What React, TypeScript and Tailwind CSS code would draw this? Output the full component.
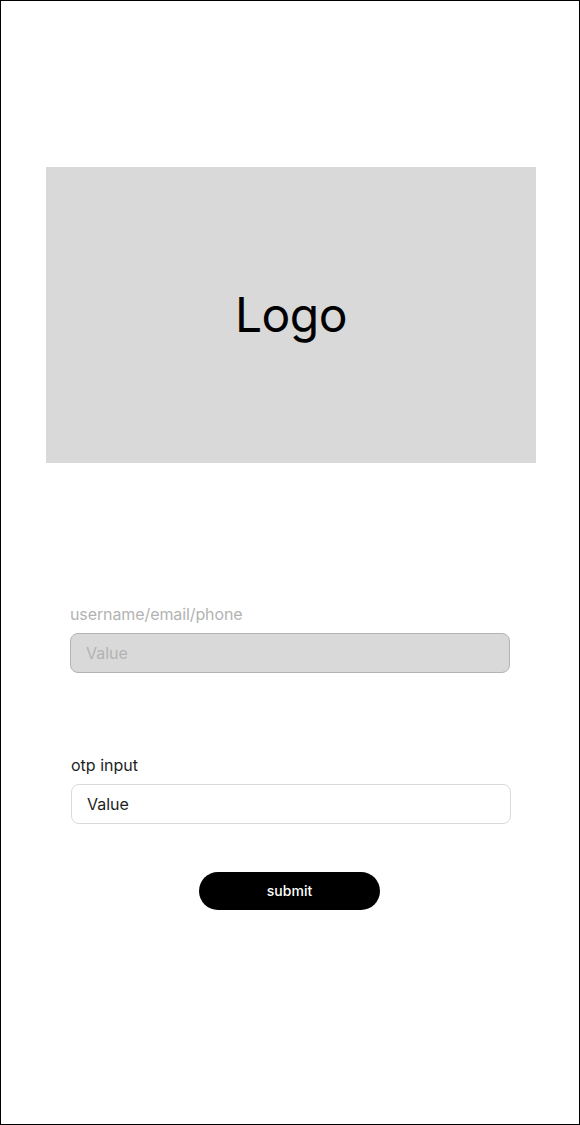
export default function App() {
  return (
    <div className="w-[580px] h-[1125px] border border-black bg-white flex flex-col font-['Inter',sans-serif]">
      <div className="mt-[166px] ml-[45px] w-[490px] h-[296px] bg-[#d9d9d9] flex items-center justify-center">
        <span className="text-[48px] leading-none tracking-[-0.5px] text-black">Logo</span>
      </div>

      <div className="mt-[140px] ml-[69px] w-[440px] flex flex-col gap-2">
        <label className="text-base leading-[22px] tracking-[-0.1px] text-[#b3b3b3]">username/email/phone</label>
        <div className="h-10 rounded-lg border border-[#b3b3b3] bg-[#d9d9d9] px-[15px] flex items-center text-base text-[#b3b3b3]">
          Value
        </div>
      </div>

      <div className="mt-[81px] ml-[70px] w-[440px] flex flex-col gap-2">
        <label className="text-base leading-[22px] text-[#1e1e1e]">otp input</label>
        <div className="h-10 rounded-lg border border-[#d9d9d9] bg-white px-[15px] flex items-center text-base text-[#1e1e1e]">
          Value
        </div>
      </div>

      <button className="mt-12 ml-[198px] w-[181px] h-[38px] rounded-full bg-black text-white text-sm font-medium flex items-center justify-center">
        submit
      </button>
    </div>
  );
}
